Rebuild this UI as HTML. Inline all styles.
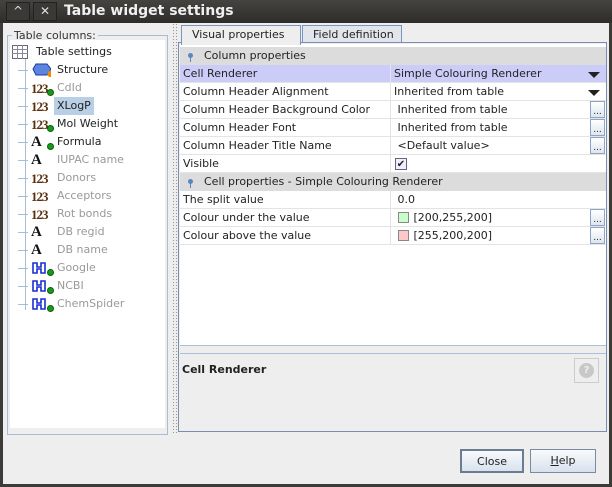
<!DOCTYPE html>
<html><head><style>
*{margin:0;padding:0;box-sizing:border-box}
body{width:612px;height:487px;overflow:hidden;background:#3c3b37;font-family:"DejaVu Sans","Liberation Sans",sans-serif;font-size:11px;color:#222;position:relative}
.abs{position:absolute}
#title{left:0;top:0;width:612px;height:23px;background:linear-gradient(#45443f,#2e2d2a);}
#title .t{left:64px;top:3px;color:#f0f0f0;font-weight:bold;font-size:14px;white-space:nowrap}
.tb{top:2px;width:24px;height:19px;border:1px solid #222;background:#3a3935;color:#ddd;text-align:center;font-size:12px;line-height:17px}
#body{left:3px;top:23px;width:606px;height:461px;background:#eeeeee}
fieldset{position:absolute;left:4px;top:6px;width:161px;height:406px;border:1px solid #a8bcd6;}
legend{margin-left:4px;padding:0 2px;color:#333}
#tree{left:7px;top:17px;width:155px;height:388px;background:#fff}
.it{position:absolute;left:0;height:18px;line-height:18px;white-space:nowrap;color:#999}
.it.on{color:#222}
.ic{position:absolute;left:21px;top:1px;width:20px;height:15px;font-weight:bold}
.lbl{position:absolute;left:47px}
.hl{position:absolute;left:8px;top:9px;width:10px;border-top:1px solid #a8bcd6}
#vl{left:15px;top:19px;height:251px;border-left:1px solid #a8bcd6}
.n123{font-family:"Liberation Serif",serif;color:#5a2e0a;font-size:13px;letter-spacing:-1px}
.AA{font-family:"Liberation Serif",serif;color:#111;font-size:15px;line-height:17px}
.dot{position:absolute;width:7px;height:7px;border-radius:50%;background:#1a9a1a;border:1px solid #0b600b}
.row .v{position:absolute;left:210px;top:0;height:18px;border-left:1px solid #e4e4e4;padding-left:3px;width:216px}
#split{left:169px;top:0;width:6px;height:410px;background-image:radial-gradient(#999 0.6px,transparent 0.8px);background-size:3px 3px}
.tab{top:2px;height:19px;border:1px solid #7a96c0;border-bottom:none;line-height:17px;padding-left:10px;color:#222}
#panel{left:175px;top:19px;width:429px;height:390px;border:1px solid #7a8db0;background:#eee}
#tbl{left:1px;top:1px;width:426px;height:301px;background:#fff}
.row{position:absolute;left:0;width:426px;height:18px;line-height:17px;border-bottom:1px solid #e4e4e4;white-space:nowrap}
.row .k{position:absolute;left:3px}
.sec{background:#dcdcdc;border-bottom:none}
.sec .k{left:24px}
.pin{position:absolute;left:8px;top:6px;width:5px;height:5px;border-radius:50%;background:#5a86c0}
.pin:after{content:"";position:absolute;left:2px;top:4px;height:5px;border-left:1px solid #5a86c0}
.dd{position:absolute;right:6px;top:7px;border-left:6px solid transparent;border-right:6px solid transparent;border-top:6px solid #222}
.eb{position:absolute;right:1px;top:0;width:15px;height:17px;border:1px solid #8fa4c4;background:linear-gradient(#fff,#dde6f0);font-size:9px;line-height:20px;text-align:center}
.sw{display:inline-block;width:11px;height:11px;border:1px solid #888;vertical-align:-2px;margin-right:5px}
.btn{top:426px;height:24px;border:1px solid #7a8aa0;background:linear-gradient(#f8fafc,#d8e2ee);text-align:center;line-height:22px;color:#222;font-size:11px}
</style></head><body>
<div id="title" class="abs">
<div class="abs tb" style="left:6px">^</div>
<div class="abs tb" style="left:33px">✕</div>
<div class="abs t">Table widget settings</div>
</div>
<div id="body" class="abs">
<fieldset><legend>Table columns:</legend></fieldset>
<div id="tree" class="abs">
<div id="vl" class="abs"></div>
<div class="it on" style="top:3px;left:-4px"><svg style="position:absolute;left:6px;top:2px" width="16" height="14"><rect x="0.5" y="0.5" width="15" height="13" fill="#fff" stroke="#667"/><path d="M0 4.5H16M0 8.5H16M5.5 0V14M10.5 0V14" stroke="#889"/></svg><span class="lbl" style="left:30px">Table settings</span></div>
<div class="it on" style="top:21px"><span class="hl"></span><svg class="ic" width="24" height="16"><polygon points="5,2 16,2 20,7 16,13 5,13 2,7" fill="#5a84e0" stroke="#1a3a9a"/><circle cx="20" cy="12" r="3.5" fill="#f08a00"/></svg><span class="lbl">Structure</span></div>
<div class="it" style="top:39px"><span class="hl"></span><span class="ic n123">123</span><span class="dot" style="left:37px;top:10px"></span><span class="lbl">CdId</span></div>
<div class="it on" style="top:57px"><span class="hl"></span><span class="ic n123">123</span><span class="lbl" style="background:#b8cfe5;padding:0 3px;left:44px">XLogP</span></div>
<div class="it on" style="top:75px"><span class="hl"></span><span class="ic n123">123</span><span class="dot" style="left:37px;top:10px"></span><span class="lbl">Mol Weight</span></div>
<div class="it on" style="top:93px"><span class="hl"></span><span class="ic AA">A</span><span class="dot" style="left:37px;top:10px"></span><span class="lbl">Formula</span></div>
<div class="it" style="top:111px"><span class="hl"></span><span class="ic AA">A</span><span class="lbl">IUPAC name</span></div>
<div class="it" style="top:129px"><span class="hl"></span><span class="ic n123">123</span><span class="lbl">Donors</span></div>
<div class="it" style="top:147px"><span class="hl"></span><span class="ic n123">123</span><span class="lbl">Acceptors</span></div>
<div class="it" style="top:165px"><span class="hl"></span><span class="ic n123">123</span><span class="lbl">Rot bonds</span></div>
<div class="it" style="top:183px"><span class="hl"></span><span class="ic AA">A</span><span class="lbl">DB regid</span></div>
<div class="it" style="top:201px"><span class="hl"></span><span class="ic AA">A</span><span class="lbl">DB name</span></div>
<div class="it" style="top:219px"><span class="hl"></span><svg class="ic" width="20" height="16"><path d="M2 3h4v4h4V3h4v10h-4V9H6v4H2z" fill="#fff" stroke="#1a2fd0" stroke-width="1.6"/></svg><span class="dot" style="left:37px;top:10px"></span><span class="lbl">Google</span></div>
<div class="it" style="top:237px"><span class="hl"></span><svg class="ic" width="20" height="16"><path d="M2 3h4v4h4V3h4v10h-4V9H6v4H2z" fill="#fff" stroke="#1a2fd0" stroke-width="1.6"/></svg><span class="dot" style="left:37px;top:10px"></span><span class="lbl">NCBI</span></div>
<div class="it" style="top:255px"><span class="hl"></span><svg class="ic" width="20" height="16"><path d="M2 3h4v4h4V3h4v10h-4V9H6v4H2z" fill="#fff" stroke="#1a2fd0" stroke-width="1.6"/></svg><span class="dot" style="left:37px;top:10px"></span><span class="lbl">ChemSpider</span></div>
</div>
<div id="split" class="abs"></div>
<div class="abs tab" style="left:178px;width:120px;background:#eee;height:20px;z-index:2">Visual properties</div>
<div class="abs tab" style="left:299px;width:100px;background:#e2e6ec">Field definition</div>
<div id="panel" class="abs">
<div id="tbl" class="abs">
<div class="row sec" style="top:3px"><span class="pin"></span><span class="k">Column properties</span></div>
<div class="row" style="top:21px;background:#ccccf8"><span class="k">Cell Renderer</span><span class="v">Simple Colouring Renderer<span class="dd"></span></span></div>
<div class="row" style="top:39px"><span class="k">Column Header Alignment</span><span class="v">Inherited from table<span class="dd"></span></span></div>
<div class="row" style="top:57px"><span class="k">Column Header Background Color</span><span class="v">&nbsp;Inherited from table<span class="eb">...</span></span></div>
<div class="row" style="top:75px"><span class="k">Column Header Font</span><span class="v">&nbsp;Inherited from table<span class="eb">...</span></span></div>
<div class="row" style="top:93px"><span class="k">Column Header Title Name</span><span class="v">&nbsp;&lt;Default value&gt;<span class="eb">...</span></span></div>
<div class="row" style="top:111px"><span class="k">Visible</span><span class="v"><span style="position:absolute;left:4px;top:3px;width:12px;height:12px;border:1px solid #667;background:#eef;font-size:10px;line-height:11px;text-align:center">✔</span></span></div>
<div class="row sec" style="top:129px"><span class="pin"></span><span class="k">Cell properties - Simple Colouring Renderer</span></div>
<div class="row" style="top:147px"><span class="k">The split value</span><span class="v">&nbsp;0.0</span></div>
<div class="row" style="top:165px"><span class="k">Colour under the value</span><span class="v">&nbsp;<span class="sw" style="background:#c8ffc8"></span>[200,255,200]<span class="eb">...</span></span></div>
<div class="row" style="top:183px"><span class="k">Colour above the value</span><span class="v">&nbsp;<span class="sw" style="background:#ffc8c8"></span>[255,200,200]<span class="eb">...</span></span></div>
</div>
<div class="abs" style="left:1px;top:302px;width:426px;border-top:1px solid #a8c0dc"></div>
<div class="abs" style="left:1px;top:310px;width:426px;border-top:1px solid #a8c0dc"></div>
<div class="abs" style="left:3px;top:320px;font-weight:bold">Cell Renderer</div>
<div class="abs" style="left:395px;top:315px;width:25px;height:25px;border:1px solid #ccc"><div style="margin:4px;width:15px;height:15px;border-radius:50%;background:#c8c8c8;color:#eee;font-size:10px;font-weight:bold;text-align:center;line-height:15px">?</div></div>
</div>
<div class="abs btn" style="left:457px;width:64px;border:2px solid #6a7c94">Close</div>
<div class="abs btn" style="left:527px;width:66px"><u>H</u>elp</div>
</div>
</body></html>
